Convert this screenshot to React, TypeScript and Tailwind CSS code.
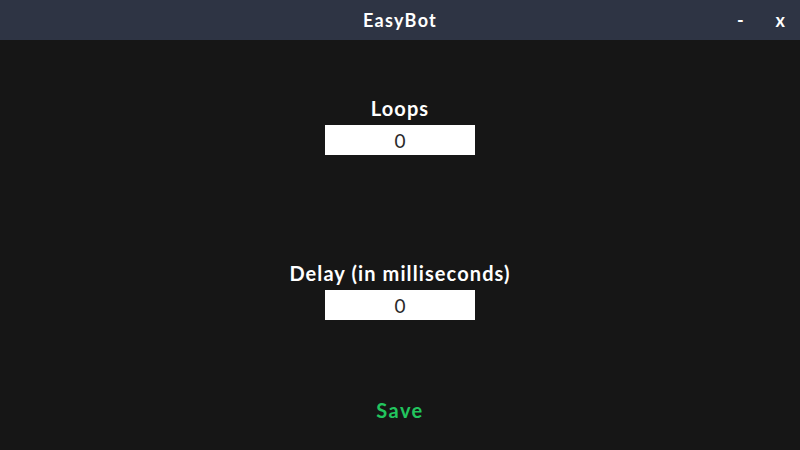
import React, { useState } from 'react';

const font = { fontFamily: 'Lato, "Open Sans", sans-serif' };

const Field: React.FC<{ label: string; value: string; onChange: (v: string) => void }> = ({ label, value, onChange }) => (
  <div className="flex flex-col items-center">
    <label className="text-[20px] leading-[24px] font-bold tracking-[1.1px] text-white">{label}</label>
    <input
      value={value}
      onChange={(e) => onChange(e.target.value)}
      className="mt-[5px] w-[150px] h-[30px] bg-white text-center text-[19px] font-normal text-[#2a2a2a] outline-none"
    />
  </div>
);

export default function App() {
  const [loops, setLoops] = useState('0');
  const [delay, setDelay] = useState('0');

  return (
    <div className="w-[800px] h-[450px] flex flex-col bg-[#161616]" style={font}>
      <header className="h-10 shrink-0 grid grid-cols-[1fr_auto_1fr] items-center bg-[#2e3444] text-white">
        <div />
        <h1 className="text-[18px] font-bold tracking-[1.3px]">EasyBot</h1>
        <div className="flex justify-end items-center pr-[15px] gap-[32px] text-[18px] font-bold pt-[1px]">
          <button>-</button>
          <button>x</button>
        </div>
      </header>

      <main className="flex-1 flex flex-col items-center pt-[56px]">
        <Field label="Loops" value={loops} onChange={setLoops} />
        <div className="h-[106px]" />
        <Field label="Delay (in milliseconds)" value={delay} onChange={setDelay} />
        <button className="mt-[78px] text-[20px] leading-[24px] font-bold tracking-[1.4px] text-[#22c55e]">Save</button>
      </main>
    </div>
  );
}
